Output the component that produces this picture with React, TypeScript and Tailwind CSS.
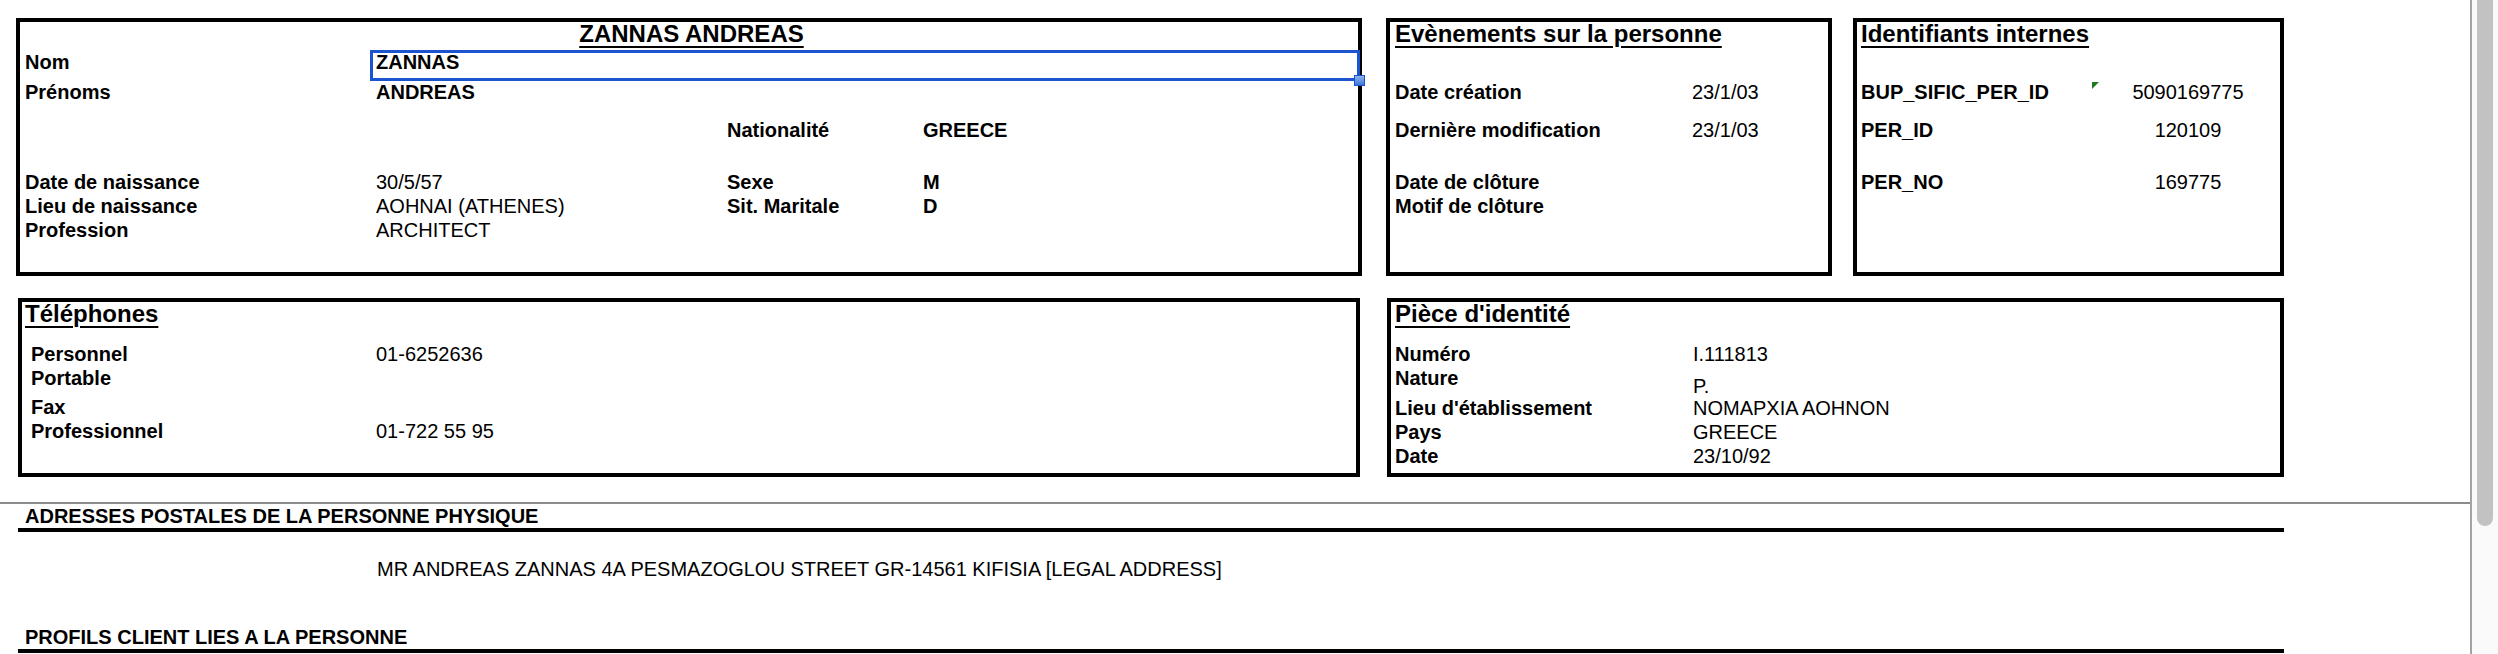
import React from 'react'

const FONT = "font-['Liberation_Sans',Arial,Helvetica,sans-serif]"

// ── Fiche personne ────────────────────────────────────────────────────────────
function Row({ children, cols, className = '' }: { children: React.ReactNode; cols: string; className?: string }) {
  return <div className={`grid ${cols} leading-[24px] ${className}`}>{children}</div>
}

function BoxTitle({ children, center }: { children: React.ReactNode; center?: boolean }) {
  return (
    <div className={`text-[24px] font-bold leading-[24px] underline decoration-2 underline-offset-[4px] ${center ? 'text-center' : ''}`}>
      {children}
    </div>
  )
}

function PersonBox() {
  const cols = 'grid-cols-[351px_351px_196px_1fr]'
  return (
    <div className="relative h-[258px] w-[1346px] shrink-0 border-4 border-black pl-[5px]">
      <BoxTitle center>ZANNAS ANDREAS</BoxTitle>

      {/* cellule sélectionnée */}
      <div className="pointer-events-none absolute left-[350px] top-[28px] z-10 h-[31px] w-[990px] border-[3px] border-[#1a55cf]" />
      <div className="pointer-events-none absolute left-[1334px] top-[53px] z-20 h-[11px] w-[11px] border border-[#1a55cf] bg-gradient-to-b from-[#8fb4ee] to-[#3f77d8]" />

      <Row cols={cols} className="mt-[4px]">
        <span className="font-bold">Nom</span>
        <span className="font-bold">ZANNAS</span>
      </Row>
      <Row cols={cols} className="mt-[6px]">
        <span className="font-bold">Prénoms</span>
        <span className="font-bold">ANDREAS</span>
      </Row>
      <Row cols={cols} className="mt-[14px]">
        <span />
        <span />
        <span className="font-bold">Nationalité</span>
        <span className="font-bold">GREECE</span>
      </Row>
      <Row cols={cols} className="mt-[28px]">
        <span className="font-bold">Date de naissance</span>
        <span>30/5/57</span>
        <span className="font-bold">Sexe</span>
        <span className="font-bold">M</span>
      </Row>
      <Row cols={cols}>
        <span className="font-bold">Lieu de naissance</span>
        <span>AOHNAI (ATHENES)</span>
        <span className="font-bold">Sit. Maritale</span>
        <span className="font-bold">D</span>
      </Row>
      <Row cols={cols}>
        <span className="font-bold">Profession</span>
        <span>ARCHITECT</span>
      </Row>
    </div>
  )
}

function EventsBox() {
  const cols = 'grid-cols-[297px_1fr]'
  return (
    <div className="h-[258px] w-[446px] shrink-0 border-4 border-black pl-[5px]">
      <BoxTitle>Evènements sur la personne</BoxTitle>
      <Row cols={cols} className="mt-[34px]">
        <span className="font-bold">Date création</span>
        <span>23/1/03</span>
      </Row>
      <Row cols={cols} className="mt-[14px]">
        <span className="font-bold">Dernière modification</span>
        <span>23/1/03</span>
      </Row>
      <Row cols={cols} className="mt-[28px]">
        <span className="font-bold">Date de clôture</span>
        <span />
      </Row>
      <Row cols={cols}>
        <span className="font-bold">Motif de clôture</span>
        <span />
      </Row>
    </div>
  )
}

function IdsBox() {
  const cols = 'grid-cols-[247px_160px]'
  return (
    <div className="relative h-[258px] w-[431px] shrink-0 border-4 border-black pl-[4px]">
      <BoxTitle>Identifiants internes</BoxTitle>
      <svg className="absolute left-[235px] top-[60px]" width="7" height="7" viewBox="0 0 7 7">
        <polygon points="0,0 7,0 0,7" fill="#1c7a1c" />
      </svg>
      <Row cols={cols} className="mt-[34px]">
        <span className="font-bold">BUP_SIFIC_PER_ID</span>
        <span className="text-center">5090169775</span>
      </Row>
      <Row cols={cols} className="mt-[14px]">
        <span className="font-bold">PER_ID</span>
        <span className="text-center">120109</span>
      </Row>
      <Row cols={cols} className="mt-[28px]">
        <span className="font-bold">PER_NO</span>
        <span className="text-center">169775</span>
      </Row>
    </div>
  )
}

function PhonesBox() {
  const cols = 'grid-cols-[345px_1fr]'
  return (
    <div className="ml-[2px] h-[179px] w-[1342px] shrink-0 border-4 border-black pl-[3px]">
      <BoxTitle>Téléphones</BoxTitle>
      <div className="pl-[6px]">
        <Row cols={cols} className="mt-[16px]">
          <span className="font-bold">Personnel</span>
          <span>01-6252636</span>
        </Row>
        <Row cols={cols}>
          <span className="font-bold">Portable</span>
          <span />
        </Row>
        <Row cols={cols} className="mt-[5px]">
          <span className="font-bold">Fax</span>
          <span />
        </Row>
        <Row cols={cols}>
          <span className="font-bold">Professionnel</span>
          <span>01-722 55 95</span>
        </Row>
      </div>
    </div>
  )
}

function IdentityBox() {
  const cols = 'grid-cols-[298px_1fr]'
  return (
    <div className="h-[179px] w-[897px] shrink-0 border-4 border-black pl-[4px]">
      <BoxTitle>Pièce d'identité</BoxTitle>
      <Row cols={cols} className="mt-[16px]">
        <span className="font-bold">Numéro</span>
        <span>I.111813</span>
      </Row>
      <Row cols={cols}>
        <span className="font-bold">Nature</span>
        <span className="translate-y-[8px]">P.</span>
      </Row>
      <Row cols={cols} className="mt-[6px]">
        <span className="font-bold">Lieu d'établissement</span>
        <span>NOMAPXIA AOHNON</span>
      </Row>
      <Row cols={cols}>
        <span className="font-bold">Pays</span>
        <span>GREECE</span>
      </Row>
      <Row cols={cols}>
        <span className="font-bold">Date</span>
        <span>23/10/92</span>
      </Row>
    </div>
  )
}

function SectionHeader({ children }: { children: React.ReactNode }) {
  return (
    <>
      <div className="pl-[25px] text-[20px] font-bold leading-[23px]">{children}</div>
      <div className="ml-[18px] h-[4px] w-[2266px] bg-black" />
    </>
  )
}

export default function App() {
  return (
    <div className={`${FONT} flex h-[654px] w-[2498px] overflow-hidden bg-white text-[20px] text-black`}>
      <main className="flex-1">
        <div className="pl-[16px] pt-[18px]">
          <div className="flex">
            <PersonBox />
            <div className="ml-[24px]">
              <EventsBox />
            </div>
            <div className="ml-[21px]">
              <IdsBox />
            </div>
          </div>
          <div className="mt-[22px] flex">
            <PhonesBox />
            <div className="ml-[27px]">
              <IdentityBox />
            </div>
          </div>
        </div>

        <div className="mt-[25px] h-[2px] w-full bg-[#8c8c8c]" />

        <div className="mt-[1px]">
          <SectionHeader>ADRESSES POSTALES DE LA PERSONNE PHYSIQUE</SectionHeader>
          <div className="mt-[25px] pl-[377px] leading-[24px]">
            MR ANDREAS ZANNAS 4A PESMAZOGLOU STREET GR-14561 KIFISIA [LEGAL ADDRESS]
          </div>
          <div className="mt-[45px]">
            <SectionHeader>PROFILS CLIENT LIES A LA PERSONNE</SectionHeader>
          </div>
        </div>
      </main>

      {/* barre de défilement */}
      <div className="w-[28px] shrink-0 border-l-2 border-[#a3a3a3] bg-[#fafafa] pl-[5px] pr-[5px]">
        <div className="h-[526px] w-full rounded-b-full bg-[#c2c2c2]" />
      </div>
    </div>
  )
}
